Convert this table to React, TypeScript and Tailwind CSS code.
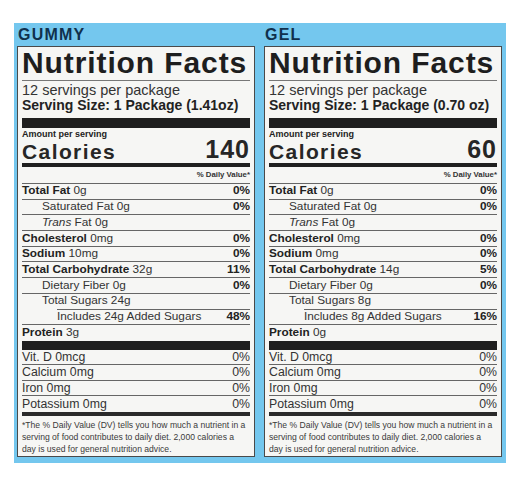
import type { ReactNode } from "react";

type Nutrient = {
  name: ReactNode;
  amount: string;
  dv?: string;
  bold?: boolean;
  indent?: 0 | 1 | 2;
  rule?: "full" | "indent" | "none";
};

type LabelData = {
  title: string;
  serving: string;
  calories: string;
  rows: Nutrient[];
};

const gummy: LabelData = {
  title: "GUMMY",
  serving: "Serving Size: 1 Package (1.41oz)",
  calories: "140",
  rows: [
    { name: "Total Fat", amount: "0g", dv: "0%", bold: true },
    { name: "Saturated Fat", amount: "0g", dv: "0%", indent: 1 },
    { name: <><i>Trans</i> Fat</>, amount: "0g", indent: 1 },
    { name: "Cholesterol", amount: "0mg", dv: "0%", bold: true },
    { name: "Sodium", amount: "10mg", dv: "0%", bold: true },
    { name: "Total Carbohydrate", amount: "32g", dv: "11%", bold: true },
    { name: "Dietary Fiber", amount: "0g", dv: "0%", indent: 1 },
    { name: "Total Sugars", amount: "24g", indent: 1, rule: "indent" },
    { name: "Includes 24g Added Sugars", amount: "", dv: "48%", indent: 2 },
    { name: "Protein", amount: "3g", bold: true, rule: "none" },
  ],
};

const gel: LabelData = {
  title: "GEL",
  serving: "Serving Size: 1 Package (0.70 oz)",
  calories: "60",
  rows: [
    { name: "Total Fat", amount: "0g", dv: "0%", bold: true },
    { name: "Saturated Fat", amount: "0g", dv: "0%", indent: 1 },
    { name: <><i>Trans</i> Fat</>, amount: "0g", indent: 1 },
    { name: "Cholesterol", amount: "0mg", dv: "0%", bold: true },
    { name: "Sodium", amount: "0mg", dv: "0%", bold: true },
    { name: "Total Carbohydrate", amount: "14g", dv: "5%", bold: true },
    { name: "Dietary Fiber", amount: "0g", dv: "0%", indent: 1 },
    { name: "Total Sugars", amount: "8g", indent: 1, rule: "indent" },
    { name: "Includes 8g Added Sugars", amount: "", dv: "16%", indent: 2 },
    { name: "Protein", amount: "0g", bold: true, rule: "none" },
  ],
};

const vitamins = [
  { name: "Vit. D 0mcg", rule: true },
  { name: "Calcium 0mg", rule: true },
  { name: "Iron 0mg", rule: true },
  { name: "Potassium 0mg", rule: false },
];

function NutrientRow({ row }: { row: Nutrient }) {
  const indent =
    row.indent === 2 ? "pl-[35px]" : row.indent === 1 ? "pl-[20px]" : "";
  const rule = row.rule ?? "full";

  return (
    <div className="flex h-[15.7px] flex-col">
      <div className={`flex flex-1 items-center justify-between ${indent}`}>
        <span className="whitespace-nowrap">
          {row.bold ? (
            <span className="font-bold text-[#222]">{row.name}</span>
          ) : (
            row.name
          )}
          {row.amount && <> {row.amount}</>}
        </span>
        {row.dv && <span className="font-bold text-[#222]">{row.dv}</span>}
      </div>
      {rule === "full" && <div className="h-px bg-[#666]" />}
      {rule === "indent" && <div className="ml-[35px] h-px bg-[#666]" />}
    </div>
  );
}

function Label({ data }: { data: LabelData }) {
  return (
    <div className="flex flex-1 flex-col">
      <div className="h-[23px] pl-[1px] text-[16px] leading-[23px] font-bold tracking-[1.2px] text-[#10304d]">
        {data.title}
      </div>

      <div className="border border-[#4a4a4a] bg-[#f6f6f4] px-[4px] pt-[1px] pb-[1px] text-[#333]">
        <div className="h-[30px] text-[30px] leading-[30px] font-bold tracking-[0.9px] whitespace-nowrap text-[#1e1e1e]">
          Nutrition Facts
        </div>
        <div className="mt-[2px] h-px bg-[#777]" />

        <div className="pt-[2px] text-[14.5px] leading-[15px]">12 servings per package</div>
        <div className="text-[14px] leading-[15px] font-bold whitespace-nowrap text-[#222]">
          {data.serving}
        </div>

        <div className="mt-[5px] h-[10px] bg-[#1f1f1f]" />

        <div className="mt-[2px] h-[10px] text-[9px] leading-[9px] font-bold text-[#222]">
          Amount per serving
        </div>
        <div className="flex h-[23px] items-end justify-between font-bold text-[#262626]">
          <span className="self-start text-[21px] leading-[23px] tracking-[1.4px]">Calories</span>
          <span className="mb-[4px] text-[25px] leading-[20px] tracking-[1px]">{data.calories}</span>
        </div>

        <div className="h-[4px] bg-[#1f1f1f]" />

        <div className="flex h-[17px] items-center justify-end border-b border-[#666] text-[7.8px] font-bold text-[#333]">
          % Daily Value*
        </div>

        <div className="text-[11.8px] leading-none">
          {data.rows.map((row, i) => (
            <NutrientRow key={i} row={row} />
          ))}
        </div>

        <div className="h-[9px] bg-[#1f1f1f]" />

        <div className="text-[12.3px] leading-none">
          {vitamins.map((v) => (
            <div key={v.name} className="flex h-[15.5px] flex-col">
              <div className="flex flex-1 items-center justify-between">
                <span>{v.name}</span>
                <span>0%</span>
              </div>
              {v.rule && <div className="h-px bg-[#666]" />}
            </div>
          ))}
        </div>

        <div className="h-[4px] bg-[#2a2a2a]" />

        <p className="pt-[3px] text-[8.6px] leading-[12px] whitespace-nowrap text-[#3a3a3a]">
          *The % Daily Value (DV) tells you how much a nutrient in a
          <br />
          serving of food contributes to daily diet. 2,000 calories a
          <br />
          day is used for general nutrition advice.
        </p>
      </div>
    </div>
  );
}

export default function App() {
  return (
    <div className="min-h-[481px] bg-white pt-[23px] pl-[14px] font-['Liberation_Sans',Arial,sans-serif]">
      <div className="flex w-[492px] gap-[9px] bg-[#74c7ee] pr-[4px] pb-[6px] pl-[3px]">
        <Label data={gummy} />
        <Label data={gel} />
      </div>
    </div>
  );
}
